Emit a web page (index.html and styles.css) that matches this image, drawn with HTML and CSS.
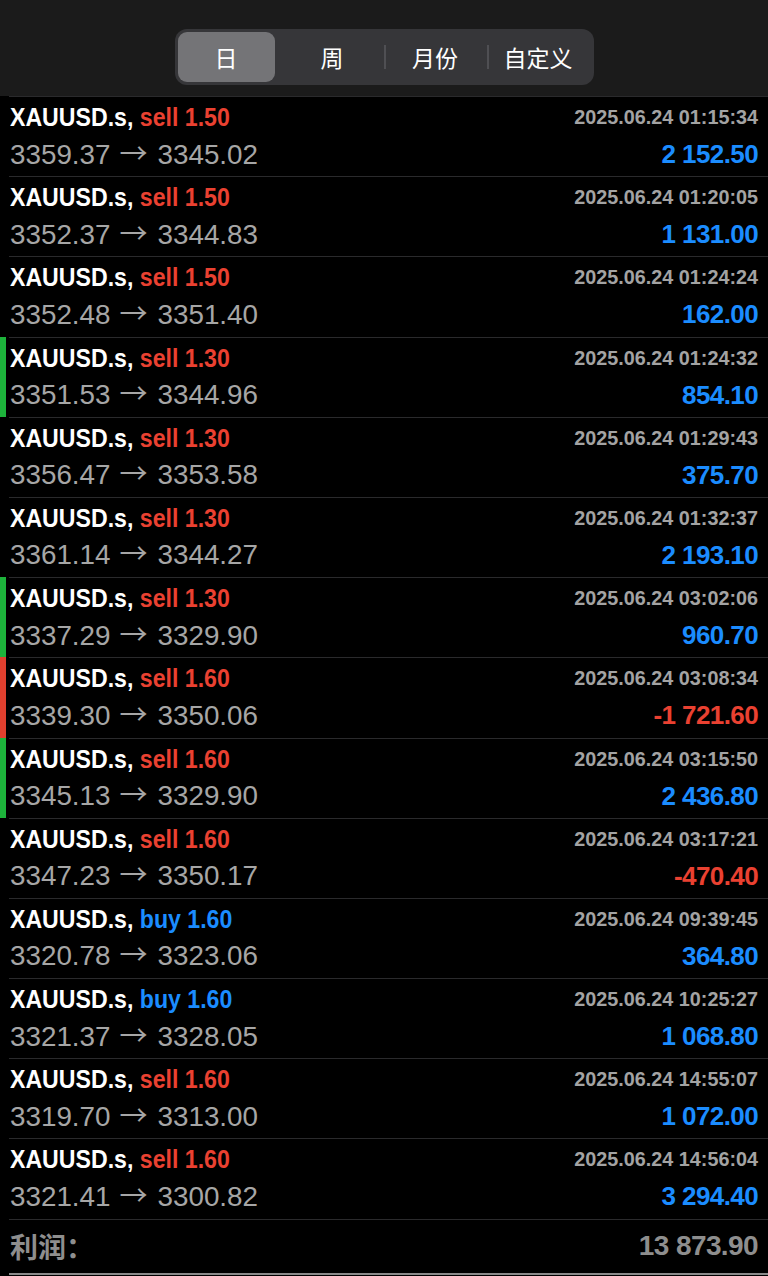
FILE: index.html
```html
<!DOCTYPE html>
<html lang="zh">
<head>
    <meta charset="UTF-8">
    <meta name="viewport" content="width=device-width, initial-scale=1.0">
    <title>历史</title>
    <link rel="stylesheet" href="styles.css">
</head>
<body>
    <header class="top">
        <div class="segments">
            <div class="seg active">日</div>
            <div class="seg">周</div>
            <div class="seg sep">月份</div>
            <div class="seg sep">自定义</div>
        </div>
    </header>

    <main class="deals">
        <div class="row">
            <span class="bar"></span>
            <div class="body">
                <div class="line"><span class="sym">XAUUSD.s, <b class="sell">sell 1.50</b></span><span class="time">2025.06.24 01:15:34</span></div>
                <div class="line"><span class="price">3359.37<i>→</i>3345.02</span><span class="pl">2 152.50</span></div>
            </div>
        </div>
        <div class="row">
            <span class="bar"></span>
            <div class="body">
                <div class="line"><span class="sym">XAUUSD.s, <b class="sell">sell 1.50</b></span><span class="time">2025.06.24 01:20:05</span></div>
                <div class="line"><span class="price">3352.37<i>→</i>3344.83</span><span class="pl">1 131.00</span></div>
            </div>
        </div>
        <div class="row">
            <span class="bar"></span>
            <div class="body">
                <div class="line"><span class="sym">XAUUSD.s, <b class="sell">sell 1.50</b></span><span class="time">2025.06.24 01:24:24</span></div>
                <div class="line"><span class="price">3352.48<i>→</i>3351.40</span><span class="pl">162.00</span></div>
            </div>
        </div>
        <div class="row">
            <span class="bar green"></span>
            <div class="body">
                <div class="line"><span class="sym">XAUUSD.s, <b class="sell">sell 1.30</b></span><span class="time">2025.06.24 01:24:32</span></div>
                <div class="line"><span class="price">3351.53<i>→</i>3344.96</span><span class="pl">854.10</span></div>
            </div>
        </div>
        <div class="row">
            <span class="bar"></span>
            <div class="body">
                <div class="line"><span class="sym">XAUUSD.s, <b class="sell">sell 1.30</b></span><span class="time">2025.06.24 01:29:43</span></div>
                <div class="line"><span class="price">3356.47<i>→</i>3353.58</span><span class="pl">375.70</span></div>
            </div>
        </div>
        <div class="row">
            <span class="bar"></span>
            <div class="body">
                <div class="line"><span class="sym">XAUUSD.s, <b class="sell">sell 1.30</b></span><span class="time">2025.06.24 01:32:37</span></div>
                <div class="line"><span class="price">3361.14<i>→</i>3344.27</span><span class="pl">2 193.10</span></div>
            </div>
        </div>
        <div class="row">
            <span class="bar green"></span>
            <div class="body">
                <div class="line"><span class="sym">XAUUSD.s, <b class="sell">sell 1.30</b></span><span class="time">2025.06.24 03:02:06</span></div>
                <div class="line"><span class="price">3337.29<i>→</i>3329.90</span><span class="pl">960.70</span></div>
            </div>
        </div>
        <div class="row">
            <span class="bar red"></span>
            <div class="body">
                <div class="line"><span class="sym">XAUUSD.s, <b class="sell">sell 1.60</b></span><span class="time">2025.06.24 03:08:34</span></div>
                <div class="line"><span class="price">3339.30<i>→</i>3350.06</span><span class="pl loss">-1 721.60</span></div>
            </div>
        </div>
        <div class="row">
            <span class="bar green"></span>
            <div class="body">
                <div class="line"><span class="sym">XAUUSD.s, <b class="sell">sell 1.60</b></span><span class="time">2025.06.24 03:15:50</span></div>
                <div class="line"><span class="price">3345.13<i>→</i>3329.90</span><span class="pl">2 436.80</span></div>
            </div>
        </div>
        <div class="row">
            <span class="bar"></span>
            <div class="body">
                <div class="line"><span class="sym">XAUUSD.s, <b class="sell">sell 1.60</b></span><span class="time">2025.06.24 03:17:21</span></div>
                <div class="line"><span class="price">3347.23<i>→</i>3350.17</span><span class="pl loss">-470.40</span></div>
            </div>
        </div>
        <div class="row">
            <span class="bar"></span>
            <div class="body">
                <div class="line"><span class="sym">XAUUSD.s, <b class="buy">buy 1.60</b></span><span class="time">2025.06.24 09:39:45</span></div>
                <div class="line"><span class="price">3320.78<i>→</i>3323.06</span><span class="pl">364.80</span></div>
            </div>
        </div>
        <div class="row">
            <span class="bar"></span>
            <div class="body">
                <div class="line"><span class="sym">XAUUSD.s, <b class="buy">buy 1.60</b></span><span class="time">2025.06.24 10:25:27</span></div>
                <div class="line"><span class="price">3321.37<i>→</i>3328.05</span><span class="pl">1 068.80</span></div>
            </div>
        </div>
        <div class="row">
            <span class="bar"></span>
            <div class="body">
                <div class="line"><span class="sym">XAUUSD.s, <b class="sell">sell 1.60</b></span><span class="time">2025.06.24 14:55:07</span></div>
                <div class="line"><span class="price">3319.70<i>→</i>3313.00</span><span class="pl">1 072.00</span></div>
            </div>
        </div>
        <div class="row">
            <span class="bar"></span>
            <div class="body">
                <div class="line"><span class="sym">XAUUSD.s, <b class="sell">sell 1.60</b></span><span class="time">2025.06.24 14:56:04</span></div>
                <div class="line"><span class="price">3321.41<i>→</i>3300.82</span><span class="pl">3 294.40</span></div>
            </div>
        </div>
    </main>

    <footer class="total">
        <span class="label">利润：</span>
        <span class="sum">13 873.90</span>
    </footer>
</body>
</html>
```

FILE: styles.css
```css
body {
    margin: 0;
    background-color: #000;
    font-family: 'Liberation Sans', Arial, 'Noto Sans CJK SC', sans-serif;
    color: #fff;
    width: 768px;
    height: 1276px;
    overflow: hidden;
}

.top {
    background-color: #1b1b1b;
    height: 96px;
    box-sizing: border-box;
    padding-top: 29px;
    display: flex;
    justify-content: center;
}

.segments {
    display: grid;
    grid-template-columns: repeat(4, 103px);
    width: 419px;
    height: 56px;
    box-sizing: border-box;
    padding: 3px;
    background-color: #363639;
    border-radius: 12px;
}

.seg {
    position: relative;
    display: flex;
    align-items: center;
    justify-content: center;
    font-family: 'Noto Sans CJK SC', sans-serif;
    font-size: 23px;
    color: #fff;
}

.seg.active {
    width: 97px;
    background-color: #747477;
    border-radius: 9px;
}

.seg.sep:before {
    content: "";
    position: absolute;
    left: 0;
    top: 13px;
    bottom: 13px;
    width: 2px;
    background-color: #4f4f53;
}

.row {
    display: flex;
    height: 80.2px;
}

.bar {
    width: 6px;
    flex-shrink: 0;
    margin-right: 3px;
}
.bar.green {
    background-color: #1db33b;
}
.bar.red {
    background-color: #e0402e;
}

.body {
    flex: 1;
    border-top: 1px solid #2a2a2c;
    padding: 2px 10px 0 1px;
}

.line {
    display: flex;
    justify-content: space-between;
    align-items: center;
    height: 37px;
}

.sym {
    display: inline-block;
    font-weight: bold;
    font-size: 25px;
    color: #fff;
    white-space: nowrap;
    transform: scaleX(0.925);
    transform-origin: left center;
}
.sym b {
    font-weight: bold;
}
.sell {
    color: #ea4131;
}
.buy {
    color: #1b8cff;
}

.time {
    font-weight: bold;
    font-size: 19.8px;
    color: #a3a3a3;
}

.price {
    font-size: 27.8px;
    line-height: 32px;
    color: #a6a6a6;
}
.price i {
    display: inline-block;
    font-style: normal;
    font-family: 'Noto Sans CJK SC', sans-serif;
    font-size: 28px;
    line-height: 20px;
    margin: 0 10px 0 9px;
}

.pl {
    font-weight: bold;
    font-size: 26px;
    letter-spacing: -0.6px;
    color: #1b8cff;
}
.pl.loss {
    color: #ea4131;
}

.total {
    display: flex;
    justify-content: space-between;
    align-items: center;
    height: 56px;
    box-sizing: border-box;
    margin-left: 9px;
    padding: 0 10px 0 1px;
    border-top: 1px solid #2a2a2c;
    border-bottom: 2px solid #8a8a8a;
    color: #8e8e8e;
    font-weight: bold;
}

.total .label {
    font-family: 'Noto Sans CJK SC', sans-serif;
    font-size: 28px;
}

.total .sum {
    font-size: 28px;
    letter-spacing: -0.6px;
}
```
